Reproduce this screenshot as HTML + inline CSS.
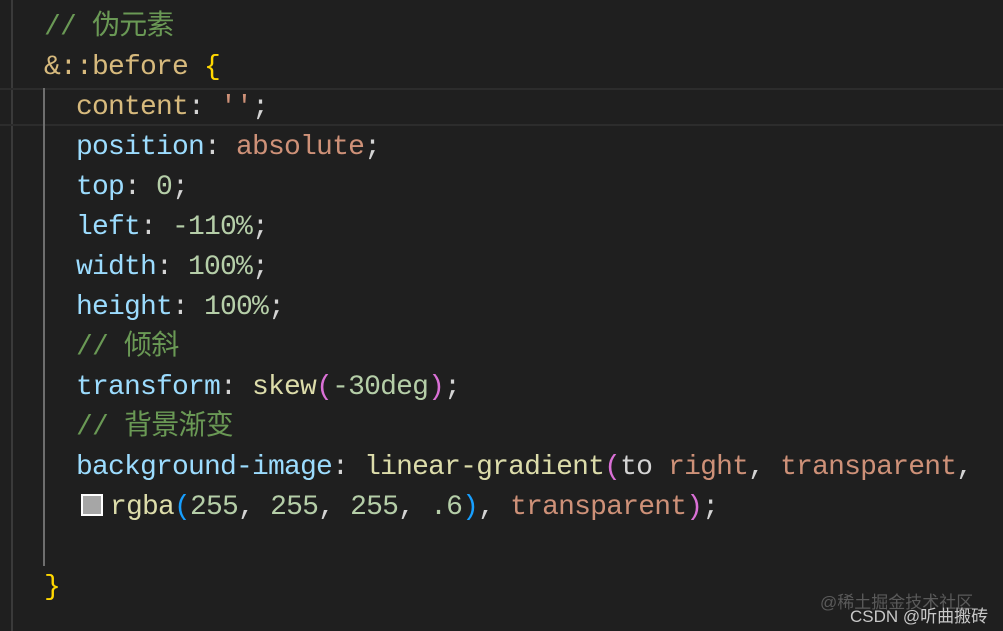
<!DOCTYPE html>
<html><head><meta charset="utf-8"><style>
body{margin:0;width:1003px;height:631px;background:#1f1f1f;overflow:hidden;position:relative;font-family:"Liberation Mono","Noto Sans CJK SC",monospace;}
.l{position:absolute;left:0;height:40px;line-height:40px;font-size:28px;letter-spacing:-0.8px;white-space:pre;color:#d4d4d4}
.c{color:#6a9955}.s{color:#d7ba7d}.b{color:#ffd700}.p{color:#9cdcfe}.v{color:#ce9178}.n{color:#b5cea8}.f{color:#dcdcaa}.k{color:#da70d6}.q{color:#179fff}
</style></head><body>
<div style="position:absolute;left:11px;top:0;width:2px;height:631px;background:#3a3a3a"></div>
<div style="position:absolute;left:0;top:88px;width:1003px;height:2px;background:#2c2c2c"></div>
<div style="position:absolute;left:0;top:124px;width:1003px;height:2px;background:#2c2c2c"></div>
<div style="position:absolute;left:43px;top:88px;width:2px;height:478px;background:#6e6e6e"></div>
<div class="l" style="top:8px;left:44px"><span class="c">// 伪元素</span></div>
<div class="l" style="top:48px;left:44px"><span class="s">&amp;::before</span> <span class="b">{</span></div>
<div class="l" style="top:88px;left:76px"><span class="s">content</span>: <span class="v">''</span>;</div>
<div class="l" style="top:128px;left:76px"><span class="p">position</span>: <span class="v">absolute</span>;</div>
<div class="l" style="top:168px;left:76px"><span class="p">top</span>: <span class="n">0</span>;</div>
<div class="l" style="top:208px;left:76px"><span class="p">left</span>: <span class="n">-110%</span>;</div>
<div class="l" style="top:248px;left:76px"><span class="p">width</span>: <span class="n">100%</span>;</div>
<div class="l" style="top:288px;left:76px"><span class="p">height</span>: <span class="n">100%</span>;</div>
<div class="l" style="top:328px;left:76px"><span class="c">// 倾斜</span></div>
<div class="l" style="top:368px;left:76px"><span class="p">transform</span>: <span class="f">skew</span><span class="k">(</span><span class="n">-30deg</span><span class="k">)</span>;</div>
<div class="l" style="top:408px;left:76px"><span class="c">// 背景渐变</span></div>
<div class="l" style="top:448px;left:76px"><span class="p">background-image</span>: <span class="f">linear-gradient</span><span class="k">(</span>to <span class="v">right</span>, <span class="v">transparent</span>,</div>
<div style="position:absolute;left:81px;top:494px;width:22px;height:22px;border:2px solid #fff;box-sizing:border-box;background:#a6a6a6"></div>
<div class="l" style="top:488px;left:110px"><span class="f">rgba</span><span class="q">(</span><span class="n">255</span>, <span class="n">255</span>, <span class="n">255</span>, <span class="n">.6</span><span class="q">)</span>, <span class="v">transparent</span><span class="k">)</span>;</div>
<div class="l" style="top:568px;left:44px"><span class="b">}</span></div>
<div style="position:absolute;left:820px;top:588px;font-family:'Liberation Sans','Noto Sans CJK SC',sans-serif;font-size:17px;color:#5a5a5a">@稀土掘金技术社区</div>
<div style="position:absolute;left:850px;top:602px;font-family:'Liberation Sans','Noto Sans CJK SC',sans-serif;font-size:17px;color:#c8c8c8">CSDN @听曲搬砖</div>
</body></html>
